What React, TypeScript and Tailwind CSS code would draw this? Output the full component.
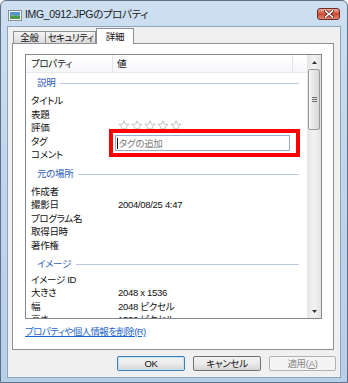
import React from "react";

const FONT = {
  fontFamily: '"Liberation Sans", "Noto Sans CJK JP", sans-serif',
} as const;

const Star = () => (
  <svg width="12" height="11" viewBox="0 0 24 22">
    <path
      d="M12 1.5 L14.8 8.2 L22.2 8.6 L16.5 13.2 L18.5 20.5 L12 16.4 L5.5 20.5 L7.5 13.2 L1.8 8.6 L9.2 8.2 Z"
      fill="#fcfcfc"
      stroke="#b9b9b9"
      strokeWidth="1.6"
      strokeLinejoin="round"
    />
  </svg>
);

const Row = ({ label, value }: { label: string; value?: string }) => (
  <div className="flex h-[13.5px] items-center pl-[5px] leading-[13.5px]">
    <div className="w-[87px] shrink-0 whitespace-nowrap">{label}</div>
    <div className="whitespace-nowrap">{value}</div>
  </div>
);

const Section = ({ title, h, pt }: { title: string; h: string; pt: string }) => (
  <div className={`flex items-start pl-[11px] pr-[8px] ${h} ${pt}`}>
    <span className="leading-[13px] text-[#2d5bb8] whitespace-nowrap">{title}</span>
    <div className="ml-[5px] mt-[7px] h-px flex-1 bg-[#b9c9e3]" />
  </div>
);

export default function App() {
  return (
    <div className="h-[383px] w-[348px] overflow-hidden bg-white [font-feature-settings:'palt']" style={FONT}>
      <div className="relative flex h-[383px] w-[348px] flex-col rounded-t-[6px] border border-[#5d7189] bg-gradient-to-b from-[#cddff1] via-[#bfd5ec] to-[#b7cfe8]">
        {/* title bar */}
        <div className="flex h-[25px] shrink-0 items-start pl-[7px] pr-[7px]">
          <svg width="14" height="11" viewBox="0 0 14 11" className="mt-[9px] shrink-0">
            <rect x="0.5" y="0.5" width="13" height="10" fill="#f7f7f7" stroke="#8a8f96" />
            <rect x="2" y="2" width="10" height="4" fill="#4f95d8" />
            <rect x="2" y="6" width="10" height="3" fill="#4d9a4c" />
            <path d="M2 6 L5 4.5 L8 6 L12 4.8 L12 6 Z" fill="#7fb56a" />
          </svg>
          <div className="ml-[3px] mt-[6px] whitespace-nowrap text-[10.5px] leading-[15px] tracking-[-0.35px] text-[#1b1b1b]">
            IMG_0912.JPGのプロパティ
          </div>
          <div className="ml-auto mt-[7px] flex h-[12px] w-[23px] items-center justify-center rounded-[3px] border border-[#6e2a23] bg-gradient-to-b from-[#eab0a2] via-[#c9482f] to-[#e08a72]">
            <svg width="10" height="8" viewBox="0 0 10 8">
              <path d="M1.5 1 L8.5 7 M8.5 1 L1.5 7" stroke="#5b1d16" strokeWidth="3" strokeLinecap="square" />
              <path d="M1.5 1 L8.5 7 M8.5 1 L1.5 7" stroke="#ffffff" strokeWidth="1.6" strokeLinecap="square" />
            </svg>
          </div>
        </div>

        {/* body */}
        <div className="mx-[6px] mb-[4px] flex flex-1 flex-col border border-[#8da2bb] bg-[#f0f0f0] text-[9.5px] tracking-[-0.3px] text-[#111]">
          {/* tabs */}
          <div className="flex h-[16px] items-end pl-[5px]">
            <div className="flex h-[12px] w-[33px] items-center justify-center border border-b-0 border-[#8d9098] bg-gradient-to-b from-[#f4f4f4] to-[#dadada] leading-[11px]">
              全般
            </div>
            <div className="flex h-[12px] w-[50px] items-center justify-center whitespace-nowrap border border-b-0 border-l-0 border-[#8d9098] bg-gradient-to-b from-[#f4f4f4] to-[#dadada] leading-[11px] tracking-[-0.6px]">
              セキュリティ
            </div>
            <div className="relative z-10 -mb-px flex h-[16px] w-[38px] items-start justify-center border border-b-0 border-[#8d9098] bg-white pt-[2px] leading-[11px]">
              詳細
            </div>
          </div>

          {/* panel */}
          <div className="ml-[4px] mr-[6px] flex h-[307px] shrink-0 flex-col border border-[#8d9098] bg-white">
            {/* list box */}
            <div className="ml-[12px] mt-[10px] flex h-[265px] w-[297px] shrink-0 border border-[#848891] bg-white">
              <div className="flex min-w-0 flex-1 flex-col">
                {/* header */}
                <div className="flex h-[18px] shrink-0 border-b border-[#e6e9ee] bg-gradient-to-b from-white to-[#f5f6f8] leading-[18px]">
                  <div className="w-[87px] border-r border-[#e2e4e8] pl-[5px]">プロパティ</div>
                  <div className="w-[180px] border-r border-[#e2e4e8] pl-[4px]">値</div>
                  <div className="flex-1" />
                </div>
                <div className="flex-1 overflow-hidden">
                  <Section title="説明" h="h-[21px]" pt="pt-[3px]" />
                  <Row label="タイトル" />
                  <Row label="表題" />
                  <div className="flex h-[13.5px] items-center pl-[5px] leading-[13.5px]">
                    <div className="w-[87px] shrink-0">評価</div>
                    <div className="-mt-[4px] flex gap-px">
                      <Star />
                      <Star />
                      <Star />
                      <Star />
                      <Star />
                    </div>
                  </div>
                  <Row label="タグ" />
                  <Row label="コメント" />
                  <Section title="元の場所" h="h-[23px]" pt="pt-[5px]" />
                  <Row label="作成者" />
                  <Row label="撮影日" value="2004/08/25 4:47" />
                  <Row label="プログラム名" />
                  <Row label="取得日時" />
                  <Row label="著作権" />
                  <Section title="イメージ" h="h-[20.5px]" pt="pt-[4.5px]" />
                  <Row label="イメージ ID" />
                  <Row label="大きさ" value="2048 x 1536" />
                  <Row label="幅" value="2048 ピクセル" />
                  <Row label="高さ" value="1536 ピクセル" />
                </div>
              </div>
              {/* scrollbar */}
              <div className="flex w-[14px] shrink-0 flex-col bg-gradient-to-r from-[#e4e4e4] via-[#f3f3f3] to-[#e4e4e4]">
                <div className="flex h-[14px] items-center justify-center">
                  <svg width="5" height="3" viewBox="0 0 5 3"><path d="M0 3 L2.5 0 L5 3 Z" fill="#333" /></svg>
                </div>
                <div className="mx-[1px] flex h-[61px] items-center justify-center rounded-[2px] border border-[#9a9a9a] bg-gradient-to-r from-[#f6f6f6] to-[#d6d6d6]">
                  <div className="flex flex-col gap-[1px]">
                    <div className="h-px w-[5px] bg-[#6f6f6f]" />
                    <div className="h-px w-[5px] bg-[#6f6f6f]" />
                    <div className="h-px w-[5px] bg-[#6f6f6f]" />
                  </div>
                </div>
                <div className="flex-1" />
                <div className="flex h-[14px] items-center justify-center">
                  <svg width="5" height="3" viewBox="0 0 5 3"><path d="M0 0 L2.5 3 L5 0 Z" fill="#333" /></svg>
                </div>
              </div>
            </div>
            <div className="ml-[12px] mt-[6px] whitespace-nowrap leading-[13px] tracking-[-0.6px]">
              <span className="text-[#1a66c8] underline">プロパティや個人情報を削除(R)</span>
            </div>
          </div>

          {/* buttons */}
          <div className="mt-[6px] flex justify-end gap-[8px] pr-[4px]">
            <div className="flex h-[15px] w-[68px] items-center justify-center rounded-[2px] border border-[#3c7fb1] bg-gradient-to-b from-[#f4f4f4] via-[#ebebeb] to-[#d6d6d6] leading-[13px] shadow-[inset_0_0_0_1px_#c6e3f7]">
              OK
            </div>
            <div className="flex h-[15px] w-[68px] items-center justify-center rounded-[2px] border border-[#707070] bg-gradient-to-b from-[#f2f2f2] via-[#ebebeb] to-[#d4d4d4] leading-[13px]">
              キャンセル
            </div>
            <div className="flex h-[15px] w-[67px] items-center justify-center rounded-[2px] border border-[#adb2b5] bg-[#f4f4f4] leading-[13px] text-[#8a8a8a]">
              適用(<span className="underline">A</span>)
            </div>
          </div>
        </div>

        {/* red annotation with tag input */}
        <div className="absolute left-[108px] top-[128px] h-[28px] w-[191px] border-4 border-[#ff0000] pl-[2px] pr-[6px] pt-[2px]">
          <div className="flex h-[16px] items-center border border-[#8fb0d4] bg-white pl-[1px] text-[9.5px] leading-[13px] tracking-[-0.3px] text-[#7a7a7a]">
            <div className="mr-[1px] h-[11px] w-px bg-[#111]" />
            タグの追加
          </div>
        </div>
      </div>
    </div>
  );
}
